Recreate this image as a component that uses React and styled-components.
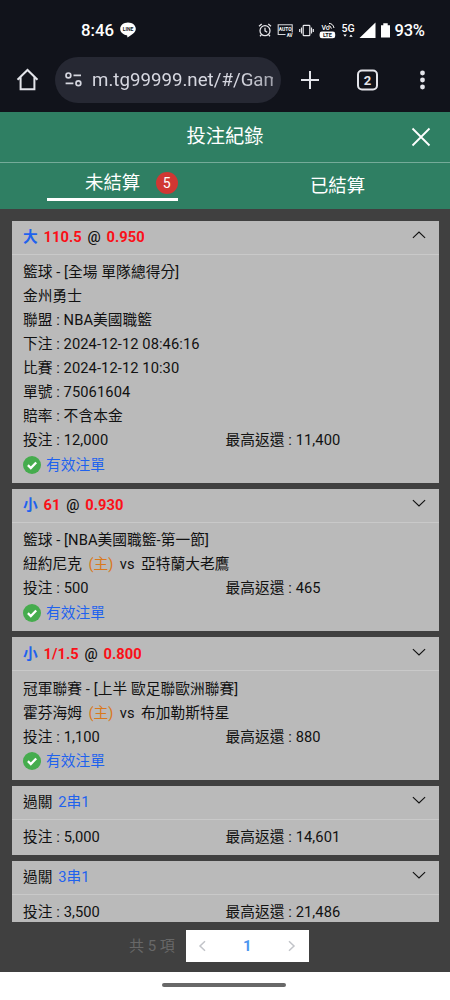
import React from 'react';
import styled, { createGlobalStyle } from 'styled-components';

const Global = createGlobalStyle`
  * { box-sizing: border-box; }
  body { margin: 0; background: #404040; font-family: Roboto, "Noto Sans CJK TC", sans-serif; }
`;

const Screen = styled.div`
  width: 450px;
  height: 1000px;
  display: flex;
  flex-direction: column;
  overflow: hidden;
  background: #404040;
`;

const StatusBar = styled.div`
  height: 57px;
  flex: none;
  padding: 3px 26px 0 81px;
  display: flex;
  align-items: center;
  background: #11131b;
  color: #fff;
  font-size: 16.800px;
  font-weight: 500;
  & svg { display: block; flex: none; }
`;

const Clock = styled.span`
  width: 39px;
  white-space: nowrap;
`;

const StatusIcons = styled.div`
  margin-left: auto;
  display: flex;
  align-items: center;
`;

const Battery = styled.span`
  width: 30px;
  padding-left: 0.5px;
  font-size: 16.5px;
  letter-spacing: -0.2px;
  white-space: nowrap;
`;

const SignalIcons = styled.div`
  display: flex;
  align-items: center;
  gap: 5px;
`;

const BrowserBar = styled.div`
  height: 55px;
  flex: none;
  padding: 0 17px 10px 16px;
  display: flex;
  align-items: center;
  background: #11131b;
  color: #e3e4ea;
  & > svg { display: block; flex: none; }
`;

const Address = styled.div`
  width: 226px;
  height: 46px;
  margin: 0 19px 0 16px;
  padding: 0 8px 0 10px;
  display: flex;
  align-items: center;
  gap: 10px;
  border-radius: 23px;
  background: #262833;
  color: #d6d7e0;
  & svg { flex: none; }
`;

const Url = styled.span`
  font-size: 18.7px;
  line-height: 28px;
  white-space: nowrap;
  overflow: hidden;
  flex: 1;
  -webkit-mask-image: linear-gradient(90deg, #000 82%, rgba(0, 0, 0, 0.7));
`;

const Header = styled.header`
  height: 51px;
  flex: none;
  padding: 0 19px;
  display: grid;
  grid-template-columns: 20px 1fr 20px;
  align-items: center;
  background: #2f7f63;
  border-bottom: 1.5px solid #75ab99;
  color: #fff;
  & svg { display: block; }
`;

const Title = styled.h1`
  grid-column: 2;
  margin: 0;
  font-size: 19.3px;
  line-height: 28px;
  font-weight: 400;
  text-align: center;
`;

const Tabs = styled.nav`
  height: 46px;
  flex: none;
  display: grid;
  grid-template-columns: 1fr 1fr;
  background: #2f7f63;
  color: #fff;
  font-size: 18.4px;
  white-space: nowrap;
`;

const Tab = styled.div`
  display: flex;
  align-items: flex-start;
  justify-content: center;
  line-height: 26px;
  padding-top: ${(p) => (p.$active ? 0 : 10)}px;
`;

const ActiveTab = styled.div`
  width: 131px;
  height: 38px;
  padding: 6.5px 0 0 38px;
  display: flex;
  border-bottom: 3.4px solid #fff;
`;

const Count = styled.span`
  width: 22px;
  height: 22px;
  flex: none;
  margin: 2px 0 0 15.5px;
  border-radius: 50%;
  background: #d03733;
  font-size: 14px;
  line-height: 22px;
  text-align: center;
`;

const List = styled.main`
  height: 712.5px;
  flex: none;
  padding: 11.5px 11px 0 12px;
  display: flex;
  flex-direction: column;
  gap: 6px;
  overflow: hidden;
`;

const Card = styled.section`
  flex: none;
  background: #bababa;
  color: #111;
  font-size: 14.7px;
  letter-spacing: 0.08px;
`;

const CardHead = styled.div`
  height: 34px;
  padding: 0 13px 0 11px;
  display: flex;
  align-items: center;
  justify-content: space-between;
  border-bottom: 1px solid #c9c9c9;
  & svg { display: block; margin-top: -4px; }
`;

const Pick = styled.div`
  display: flex;
  gap: 5.7px;
  line-height: 24px;
  font-weight: ${(p) => (p.$bold ? 700 : 400)};
`;

const Tint = styled.span`
  color: ${(p) => p.$color};
`;

const At = styled.span`
  font-weight: 500;
`;

const CardBody = styled.div`
  padding: 5.6px 11px;
`;

const Row = styled.div`
  height: 24px;
  display: flex;
  align-items: center;
  line-height: 24px;
  white-space: pre;
`;

const Match = styled(Row)`
  gap: 6.3px;
`;

const Stake = styled.span`
  width: 202.5px;
`;

const Valid = styled(Row)`
  height: 25.2px;
  gap: 5px;
  color: #1f62ee;
`;

const Pager = styled.footer`
  height: 50.5px;
  flex: none;
  padding: 8.5px 0 0 129px;
  display: flex;
  align-items: flex-start;
  gap: 11px;
`;

const Total = styled.span`
  width: 46px;
  color: #686868;
  font-size: 15px;
  line-height: 32px;
  white-space: nowrap;
`;

const Pages = styled.div`
  width: 122.5px;
  height: 32px;
  padding: 0 12px;
  display: flex;
  align-items: center;
  justify-content: space-between;
  background: #fff;
  color: #4c96ef;
  font-size: 15px;
  font-weight: 700;
`;

const SystemNav = styled.div`
  flex: 1;
  padding-top: 10.5px;
  background: #fff;
`;

const Handle = styled.div`
  width: 124px;
  height: 4.5px;
  margin: 0 auto 0 161.5px;
  border-radius: 3px;
  background: #686868;
`;

const LineIcon = () => (
  <svg width="16" height="16" viewBox="0 0 16 16">
    <path d="M8 .6C3.6.6.2 3.4.2 7c0 3.2 2.8 5.7 6.5 6.2.6.1.7.6.6 2.2C11 13.6 15.8 10.5 15.8 7 15.8 3.4 12.4.6 8 .6Z" fill="#fff" />
    <text x="8" y="8.9" textAnchor="middle" fontFamily="Roboto" fontSize="5" fontWeight="700" fill="#11131b">LINE</text>
  </svg>
);

const AlarmIcon = () => (
  <svg width="14" height="14" viewBox="0 0 14 14" fill="none" stroke="#e8e8ec" strokeWidth="1.25">
    <circle cx="7" cy="7.7" r="5" />
    <path d="M7 4.7v3.2l2.2 1.3M1 3.3 3.700 1M13 3.300 10.300 1M3.300 11.800 2 13.200M10.700 11.800l1.300 1.400" />
  </svg>
);

const AutoIcon = () => (
  <svg width="17" height="15" viewBox="0 0 17 15">
    <path d="M8.5 11.5H1.200V1.800h14v7.700" fill="none" stroke="#d5d6da" strokeWidth="1.1" />
    <text x="8.2" y="7.9" textAnchor="middle" fontFamily="Roboto" fontSize="4.9" fontWeight="700" fill="#fff">AUTO</text>
    <text x="12.6" y="13.7" textAnchor="middle" fontFamily="Roboto" fontSize="4.6" fontWeight="700" fill="#fff">AV</text>
  </svg>
);

const VibrateIcon = () => (
  <svg width="15" height="13" viewBox="0 0 15 13" fill="none" stroke="#e8e8ec" strokeWidth="1.2">
    <rect x="4.2" y="1.3" width="6.6" height="10.4" rx=".8" />
    <path d="M2.500 3.500v6M12.500 3.500v6M.7 5v3M14.300 5v3" />
  </svg>
);

const VolteIcon = () => (
  <svg width="17" height="17" viewBox="0 0 17 17">
    <text x="2.5" y="8.3" fontFamily="Roboto" fontSize="7" fontWeight="500" fill="#fff">Vo</text>
    <path d="M9.500 3.600q2.300.1 2.900 3M10 1.400q4.100.2 5 4.600" fill="none" stroke="#fff" strokeWidth="1" />
    <rect x=".6" y="9.6" width="15.600" height="6.700" rx="2.300" fill="#fff" />
    <text x="8.400" y="15" textAnchor="middle" fontFamily="Roboto" fontSize="5.600" fontWeight="700" fill="#11131b">LTE</text>
  </svg>
);

const FiveGIcon = () => (
  <svg width="14" height="17" viewBox="0 0 14 17" fill="#fff">
    <text x="7" y="9.5" textAnchor="middle" fontFamily="Roboto" fontSize="10.6" fontWeight="500">5G</text>
    <path d="M2.300 12.600h3.400L4 14.800ZM8.300 14.800h3.400L10 12.600Z" />
  </svg>
);

const Chevron = ({ up }) => (
  <svg width="14" height="8" viewBox="0 0 14 8" fill="none" stroke="#111" strokeWidth="1.15">
    <path d={up ? 'M.9 6.900 7 1.100 13.100 6.900' : 'M.9 1.100 7 6.900 13.100 1.100'} />
  </svg>
);

const PageArrow = ({ next }) => (
  <svg width="9" height="12" viewBox="0 0 9 12" fill="none" stroke="#c2c4c9" strokeWidth="1.5">
    <path d={next ? 'M2 1.200 7 6 2 10.800' : 'M7 1.200 2 6 7 10.800'} />
  </svg>
);

const CheckIcon = () => (
  <svg width="18" height="18" viewBox="0 0 18 18">
    <circle cx="9" cy="9" r="9" fill="#45ac4d" />
    <path d="m4.900 9.100 2.900 2.900 5.400-5.500" fill="none" stroke="#fff" strokeWidth="2.3" />
  </svg>
);

const ORANGE = '#d9781c';
const BLUE = '#1f62ee';
const RED = '#fa1018';

const bets = [
  {
    side: '大', line: '110.5', odds: '0.950', open: true,
    rows: ['籃球 - [全場 單隊總得分]', '金州勇士', '聯盟 : NBA美國職籃', '下注 : 2024-12-12 08:46:16', '比賽 : 2024-12-12 10:30', '單號 : 75061604', '賠率 : 不含本金'],
    stake: '12,000', payout: '11,400',
  },
  { side: '小', line: '61', odds: '0.930', rows: ['籃球 - [NBA美國職籃-第一節]'], home: '紐約尼克', away: '亞特蘭大老鷹', stake: '500', payout: '465' },
  { side: '小', line: '1/1.5', odds: '0.800', rows: ['冠軍聯賽 - [上半 歐足聯歐洲聯賽]'], home: '霍芬海姆', away: '布加勒斯特星', stake: '1,100', payout: '880' },
  { parlay: '2串1', rows: [], stake: '5,000', payout: '14,601' },
  { parlay: '3串1', rows: [], stake: '3,500', payout: '21,486' },
];

const BetCard = ({ bet }) => (
  <Card>
    <CardHead>
      {bet.parlay ? (
        <Pick><span>過關</span><Tint $color={BLUE}>{bet.parlay}</Tint></Pick>
      ) : (
        <Pick $bold>
          <Tint $color={BLUE}>{bet.side}</Tint>
          <Tint $color={RED}>{bet.line}</Tint>
          <At>@</At>
          <Tint $color={RED}>{bet.odds}</Tint>
        </Pick>
      )}
      <Chevron up={bet.open} />
    </CardHead>
    <CardBody>
      {bet.rows.map((text) => <Row key={text}>{text}</Row>)}
      {bet.home && (
        <Match>
          <span>{bet.home}</span>
          <Tint $color={ORANGE}>(主)</Tint>
          <span>vs</span>
          <span>{bet.away}</span>
        </Match>
      )}
      <Row><Stake>投注 : {bet.stake}</Stake><span>最高返還 : {bet.payout}</span></Row>
      {!bet.parlay && <Valid><CheckIcon />有效注單</Valid>}
    </CardBody>
  </Card>
);

export default function App() {
  return (
    <Screen>
      <Global />
      <StatusBar>
        <Clock>8:46</Clock>
        <LineIcon />
        <StatusIcons>
          <SignalIcons>
            <AlarmIcon />
            <AutoIcon />
            <VibrateIcon />
            <VolteIcon />
            <FiveGIcon />
          </SignalIcons>
          <svg width="39" height="17" viewBox="0 0 39 17" fill="#fff">
            <path d="M4.500 16 20.500 .5V16ZM26 3.200h2.300V1.200h4.400v2H35V15.500H26Z" />
          </svg>
          <Battery>93%</Battery>
        </StatusIcons>
      </StatusBar>
      <BrowserBar>
        <svg width="23" height="23" viewBox="0 0 23 23" fill="none" stroke="#e3e4ea" strokeWidth="2">
          <path d="M1.500 11.800 11.500 2l10 9.800M4.600 9v12.200h13.800V9" />
        </svg>
        <Address>
          <svg width="17" height="15" viewBox="0 0 17 15" fill="none" stroke="#d6d7e0" strokeWidth="1.7">
            <circle cx="3.4" cy="3.4" r="2.4" /><path d="M8.500 3.400H16M.6 11.300h7.800" /><circle cx="13.4" cy="11.3" r="2.4" />
          </svg>
          <Url>m.tg99999.net/#/Gam</Url>
        </Address>
        <svg width="20" height="20" viewBox="0 0 20 20" stroke="#e3e4ea" strokeWidth="2"><path d="M10 1v18M1 10h18" /></svg>
        <svg width="94" height="22" viewBox="0 0 94 22">
          <rect x="38" y="1.5" width="19" height="19" rx="4" fill="none" stroke="#e3e4ea" strokeWidth="2" />
          <text x="47.5" y="15.8" textAnchor="middle" fontFamily="Roboto" fontSize="13" fontWeight="700" fill="#e3e4ea">2</text>
        </svg>
        <svg width="17" height="20" viewBox="0 0 17 20" fill="#e3e4ea">
          <circle cx="8.5" cy="3" r="2.4" /><circle cx="8.5" cy="10" r="2.4" /><circle cx="8.5" cy="17" r="2.4" />
        </svg>
      </BrowserBar>
      <Header>
        <Title>投注紀錄</Title>
        <svg width="20" height="20" viewBox="0 0 20 20" stroke="#fff" strokeWidth="1.8"><path d="m1.500 1.500 17 17M18.500 1.500l-17 17" /></svg>
      </Header>
      <Tabs>
        <Tab $active><ActiveTab>未結算<Count>5</Count></ActiveTab></Tab>
        <Tab>已結算</Tab>
      </Tabs>
      <List>
        {bets.map((bet) => <BetCard key={bet.parlay || bet.odds} bet={bet} />)}
      </List>
      <Pager>
        <Total>共 5 項</Total>
        <Pages><PageArrow /><span>1</span><PageArrow next /></Pages>
      </Pager>
      <SystemNav><Handle /></SystemNav>
    </Screen>
  );
}
